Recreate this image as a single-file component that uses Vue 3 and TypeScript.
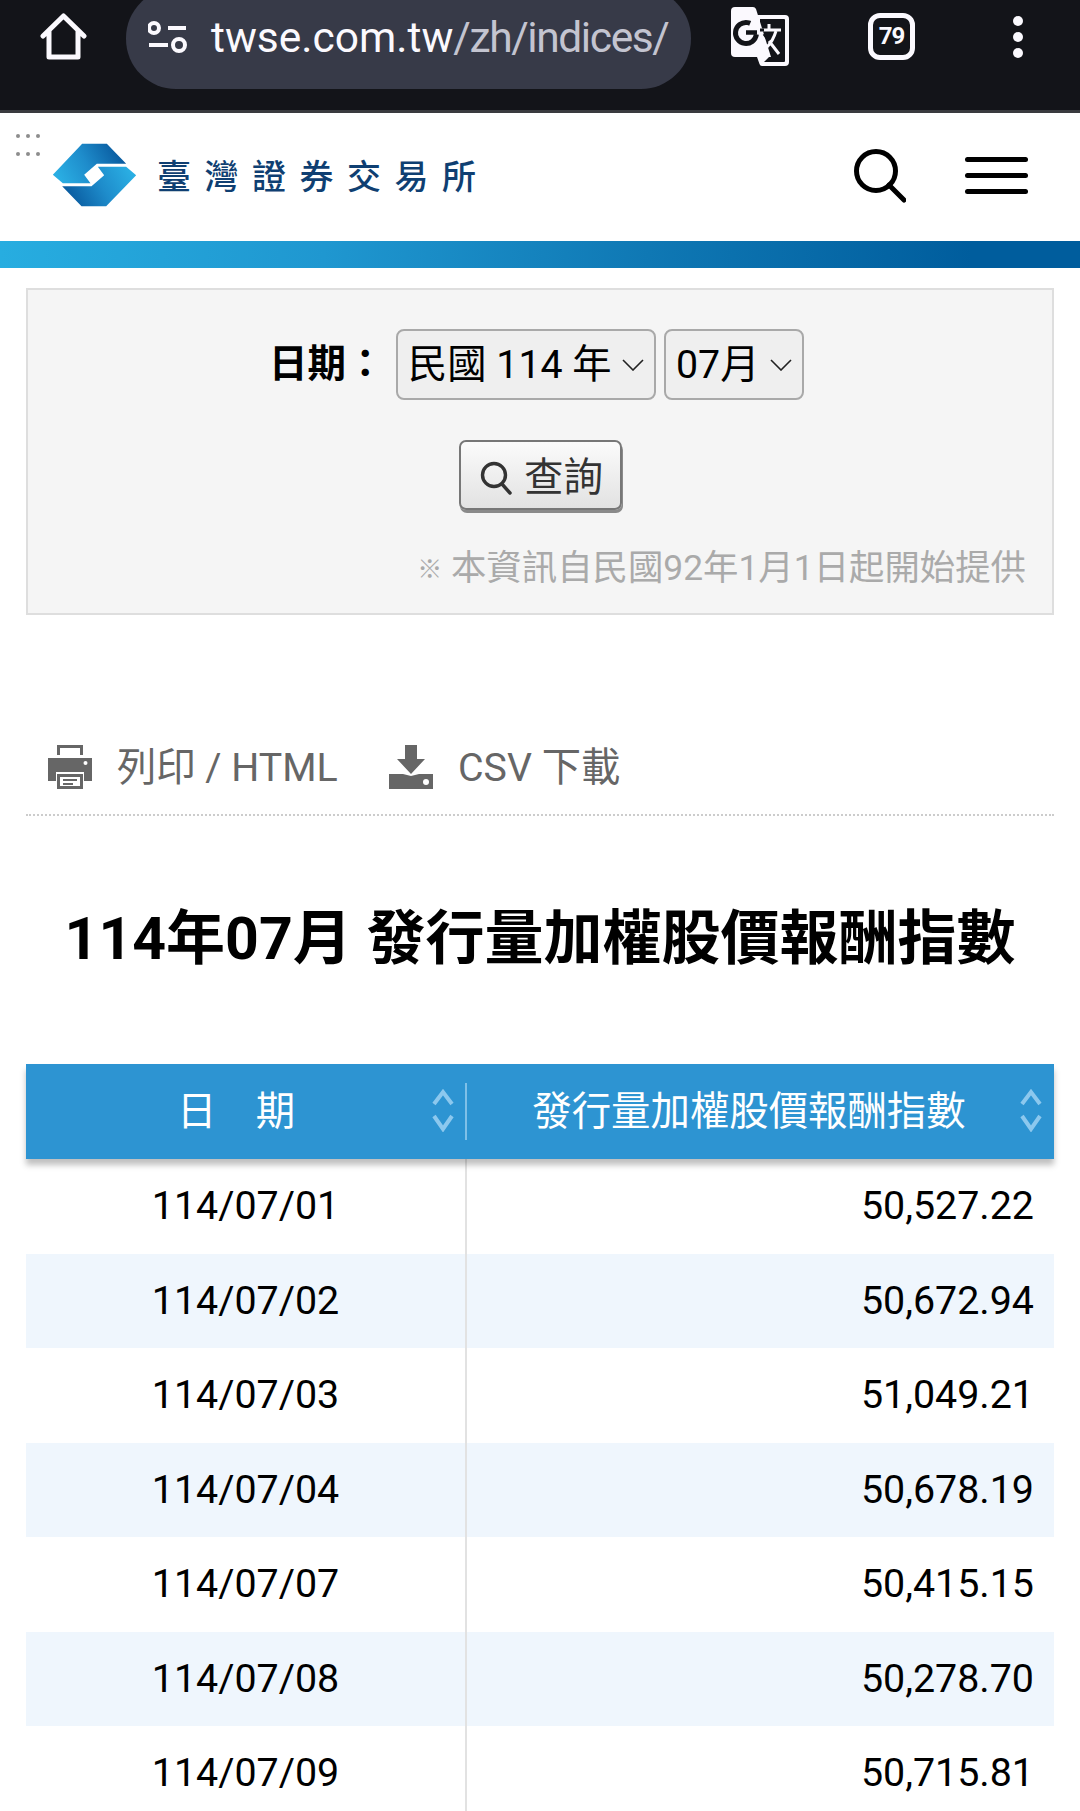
<script setup lang="ts">
interface Row { date: string; value: string }
const rows: Row[] = [
  { date: '114/07/01', value: '50,527.22' },
  { date: '114/07/02', value: '50,672.94' },
  { date: '114/07/03', value: '51,049.21' },
  { date: '114/07/04', value: '50,678.19' },
  { date: '114/07/07', value: '50,415.15' },
  { date: '114/07/08', value: '50,278.70' },
  { date: '114/07/09', value: '50,715.81' },
]
</script>

<template>
  <div class="page">
    <div class="chrome">
      <svg class="home" viewBox="0 0 47 47" width="47" height="47" fill="none" stroke="#fbf9fe" stroke-width="5" stroke-linejoin="round" stroke-linecap="round">
        <path d="M3 23 L23.5 3 L44 23 M9 18 V44 H38 V18" />
      </svg>
      <div class="pill">
        <svg class="tune" viewBox="0 0 40 40" width="40" height="40" fill="none" stroke="#fbf9fe" stroke-width="4">
          <circle cx="6" cy="8" r="5" />
          <path d="M20 8 H38 M1 25 H20" />
          <circle cx="31" cy="25" r="6" />
        </svg>
        <div class="url"><span class="host">twse.com.tw</span><span class="path">/zh/indices/</span></div>
      </div>
      <svg class="translate" viewBox="0 0 58 60" width="58" height="60">
        <path d="M26 8 H54 Q58 8 58 12 V55 Q58 59 54 59 H31 Q29 59 28.500 57 L26 50 Z" fill="#fbf9fe" />
        <path d="M29 12 H53 Q54 12 54 13 V54 Q54 55 53 55 H33 L38 50 L29 30 Z" fill="#131419" />
        <path d="M4 0 H22 Q24 0 25 2 L40 50 H4 Q0 50 0 46 V4 Q0 0 4 0 Z" fill="#fbf9fe" />
        <circle cx="15" cy="26" r="10.500" fill="none" stroke="#131419" stroke-width="5" stroke-dasharray="52 14" transform="rotate(8 15 26)" />
        <path d="M15 25.500 H26" stroke="#131419" stroke-width="4.500" />
        <path d="M29 23 H50 M38 17 V23" fill="none" stroke="#fbf9fe" stroke-width="3" />
        <path d="M29 23 H33 M33 27 L38 34" fill="none" stroke="#131419" stroke-width="3" />
        <path d="M45 24 Q42 34 36 40 M38 34 L48 47" fill="none" stroke="#fbf9fe" stroke-width="3" />
      </svg>
      <div class="tabs">79</div>
      <svg class="kebab" viewBox="0 0 10 42" width="10" height="42" fill="#fbf9fe">
        <circle cx="5" cy="5" r="5" /><circle cx="5" cy="21" r="5" /><circle cx="5" cy="37" r="5" />
      </svg>
    </div>

    <header class="site">
      <svg class="grip" viewBox="0 0 26 26" width="26" height="26" fill="#8d8d8d">
        <circle cx="3" cy="3" r="2" /><circle cx="13" cy="3" r="2" /><circle cx="23" cy="3" r="2" />
        <circle cx="3" cy="21" r="2" /><circle cx="13" cy="21" r="2" /><circle cx="23" cy="21" r="2" />
      </svg>
      <svg class="logo" viewBox="128 55 254 192" width="85" height="64">
        <defs>
          <linearGradient id="lgA" x1="0" y1="0.6" x2="1" y2="0.3">
            <stop offset="0" stop-color="#2aaee3" /><stop offset="0.45" stop-color="#1e8ccb" /><stop offset="1" stop-color="#07559a" />
          </linearGradient>
          <linearGradient id="lgB" x1="0" y1="0.7" x2="1" y2="0.4">
            <stop offset="0" stop-color="#07559a" /><stop offset="0.55" stop-color="#1e8ccb" /><stop offset="1" stop-color="#2aaee3" />
          </linearGradient>
        </defs>
        <path d="M130 150 L218 57 H292 L350 117 H262 L224 150 L243 176 H160 Z" fill="url(#lgA)" />
        <path d="M380 152 L290 245 H216 L158 185 H246 L284 152 L265 126 H350 Z" fill="url(#lgB)" />
      </svg>
      <div class="brand">臺灣證券交易所</div>
      <svg class="search" viewBox="0 0 52 54" width="52" height="54" fill="none" stroke="#000" stroke-width="5" stroke-linecap="round">
        <circle cx="22" cy="22" r="19.500" />
        <path d="M35 36 L50 51" />
      </svg>
      <div class="burger"><i></i><i></i><i></i></div>
    </header>
    <div class="band"></div>

    <main class="content">
      <form class="filter" @submit.prevent>
        <div class="date-row">
          <label class="date-label">日期：</label>
          <div class="sel sel-year">
            <select><option>民國 114 年</option></select>
            <svg viewBox="0 0 22 12" width="22" height="12" fill="none" stroke="#222" stroke-width="1.600"><path d="M1 1 L11 11 L21 1" /></svg>
          </div>
          <div class="sel sel-month">
            <select><option>07月</option></select>
            <svg viewBox="0 0 22 12" width="22" height="12" fill="none" stroke="#222" stroke-width="1.600"><path d="M1 1 L11 11 L21 1" /></svg>
          </div>
        </div>
        <div class="btn-row">
          <button class="query" type="submit">
            <svg viewBox="0 0 32 34" width="32" height="34" fill="none" stroke="#333" stroke-width="3.400" stroke-linecap="round">
              <circle cx="14" cy="14" r="11.500" /><path d="M22 23 L30 32" />
            </svg>
            <span>查詢</span>
          </button>
        </div>
        <p class="note"><span class="mark">※</span> 本資訊自民國92年1月1日起開始提供</p>
      </form>

      <div class="actions">
        <a class="action action-print">
          <svg viewBox="0 0 44 44" width="44" height="44" fill="#666">
            <path d="M9 0 H35 V10 H32 V3 H12 V10 H9 Z" />
            <path d="M0 13 H44 V36 H36 V27 H8 V36 H0 Z" />
            <circle cx="37.500" cy="18" r="2" fill="#fff" />
            <path fill-rule="evenodd" d="M9 29 H35 V44 H9 Z M12 32 V41 H32 V32 Z" />
            <path d="M15 34 H29 V36 H15 Z M15 38 H25 V40 H15 Z" />
          </svg>
          <span>列印 / HTML</span>
        </a>
        <a class="action">
          <svg viewBox="0 0 44 44" width="44" height="44" fill="#666">
            <path d="M16 0 H28 V14 H36 L22 29 L8 14 H16 Z" />
            <path d="M0 29 H14 L22 31 L30 29 H44 V44 H0 Z" />
            <circle cx="37" cy="37" r="3" fill="#fff" />
          </svg>
          <span>CSV 下載</span>
        </a>
      </div>

      <h1 class="title">114年07月 發行量加權股價報酬指數</h1>

      <div class="grid">
        <div class="head">
          <div class="th th-date">
            <span>日　期</span>
            <svg class="sort" viewBox="0 0 22 44" width="22" height="44" fill="none" stroke="#8cc8ee" stroke-width="4">
              <path d="M2 16 L11 4 L20 16 M2 28 L11 41 L20 28" />
            </svg>
          </div>
          <div class="th th-val">
            <span>發行量加權股價報酬指數</span>
            <svg class="sort" viewBox="0 0 22 44" width="22" height="44" fill="none" stroke="#8cc8ee" stroke-width="4">
              <path d="M2 16 L11 4 L20 16 M2 28 L11 41 L20 28" />
            </svg>
          </div>
        </div>
        <div v-for="r in rows" :key="r.date" class="row">
          <div class="td td-date">{{ r.date }}</div>
          <div class="td td-val">{{ r.value }}</div>
        </div>
      </div>
    </main>
  </div>
</template>

<style scoped>
.page {
  width: 1080px;
  height: 1811px;
  overflow: hidden;
  background: #fff;
  font-family: Roboto, "Noto Sans CJK TC", sans-serif;
  color: #000;
}
.chrome {
  height: 110px;
  border-bottom: 3px solid #3a3b3f;
  background: #131419;
  display: flex;
  align-items: flex-start;
  overflow: hidden;
}
.home { margin: 13px 0 0 40px; flex: none; }
.pill {
  margin: -12px 0 0 39px;
  width: 565px;
  height: 101px;
  flex: none;
  border-radius: 50px;
  background: #373a48;
  display: flex;
  align-items: center;
  padding: 12px 0 0 22px;
  box-sizing: border-box;
}
.tune { flex: none; margin-top: -9px; }
.url {
  margin-left: 23px;
  width: 460px;
  white-space: nowrap;
  font-size: 42.500px;
  line-height: 50px;
  margin-top: -14px;
}
.host { color: #fbf9fe; }
.path { color: #c3c4d0; letter-spacing: -1.400px; }
.translate { margin: 7px 0 0 40px; flex: none; }
.tabs {
  margin: 13px 0 0 79px;
  width: 47px;
  height: 47px;
  box-sizing: border-box;
  border: 5px solid #fbf9fe;
  border-radius: 12px;
  color: #fbf9fe;
  font-size: 24px;
  font-weight: 700;
  line-height: 37px;
  text-align: center;
  flex: none;
  letter-spacing: -1px;
}
.kebab { margin: 16px 0 0 98px; flex: none; }

.site {
  position: relative;
  height: 128px;
  display: flex;
  align-items: flex-start;
}
.grip { position: absolute; left: 15px; top: 20px; }
.logo { margin: 30px 0 0 52px; flex: none; }
.brand {
  margin: 42px 0 0 20px;
  width: 340px;
  font-size: 34px;
  line-height: 44px;
  letter-spacing: 13.500px;
  color: #0f3f72;
  font-weight: 500;
  white-space: nowrap;
  flex: none;
}
.search { margin: 36px 0 0 357px; flex: none; }
.burger {
  margin: 44px 0 0 59px;
  width: 63px;
  display: flex;
  flex-direction: column;
  gap: 11px;
  flex: none;
}
.burger i { display: block; height: 5px; border-radius: 3px; background: #000; }
.band {
  height: 27px;
  background: linear-gradient(90deg, #27ade0 0%, #1f97d0 30%, #0f78b4 60%, #005d9d 90%, #005d9d 100%);
}

.content { padding: 20px 26px 0; }
.filter {
  height: 327px;
  box-sizing: border-box;
  border: 2px solid #dedede;
  background: #f5f5f5;
  padding-top: 39px;
}
.date-row {
  display: flex;
  align-items: center;
  height: 71px;
  padding-left: 241px;
}
.date-label {
  font-size: 38.500px;
  font-weight: 700;
  width: 127px;
  line-height: 50px;
  margin-top: -1px;
}
.sel { position: relative; height: 71px; }
.sel-year { width: 260px; margin-right: 8px; }
.sel-month { width: 140px; }
.sel select {
  appearance: none;
  width: 100%;
  height: 100%;
  box-sizing: border-box;
  border: 2px solid #a9a9a9;
  border-radius: 8px;
  background: #efefef;
  color: #000;
  font: 39.300px Roboto, "Noto Sans CJK TC", sans-serif;
  padding: 0 0 0 10px;
}
.sel svg { position: absolute; right: 12px; top: 30px; pointer-events: none; }
.btn-row { display: flex; padding-left: 431px; margin-top: 40px; }
.query {
  width: 163px;
  height: 70px;
  box-sizing: border-box;
  border: 2px solid #777;
  border-radius: 7px;
  background: linear-gradient(#fbfbfb, #e2e2e2);
  box-shadow: 1px 3px 0 #8a8a8a;
  display: flex;
  align-items: center;
  padding: 0 0 0 19px;
  gap: 12px;
  color: #333;
  font: 39.500px Roboto, "Noto Sans CJK TC", sans-serif;
}
.query svg { margin-top: 6px; flex: none; }
.query span { margin-top: -4px; }
.note {
  margin: 33px 0 0;
  padding-right: 26px;
  text-align: right;
  font-size: 35.400px;
  line-height: 50px;
  color: #aaa;
}
.mark { font-size: 25px; font-weight: 700; vertical-align: 2px; }
.actions {
  margin-top: 130px;
  height: 69px;
  border-bottom: 2px dotted #ccc;
  display: flex;
  align-items: flex-start;
  color: #666;
  font-size: 39.300px;
  line-height: 46px;
  padding-left: 22px;
}
.action { display: flex; align-items: flex-start; gap: 25px; white-space: nowrap; }
.action-print { width: 341px; }
.title {
  margin: 83px 0 85px;
  font-size: 59px;
  line-height: 80px;
  font-weight: 700;
  text-align: center;
  white-space: nowrap;
}
.head {
  position: relative;
  height: 95px;
  background: #2d94d2;
  color: #fff;
  display: grid;
  grid-template-columns: 440px 1fr;
  box-shadow: 0 6px 6px rgba(0, 0, 0, 0.25);
  font-size: 39.400px;
}
.th {
  display: flex;
  align-items: center;
  justify-content: center;
  padding: 0 22px 8px 0;
  position: relative;
}
.th-date { padding-right: 20px; }
.th-date::after {
  content: "";
  position: absolute;
  right: -1px;
  top: 19px;
  bottom: 19px;
  width: 2px;
  background: #7fc0e8;
}
.sort { position: absolute; top: 24px; }
.th-date .sort { right: 12px; }
.th-val .sort { right: 12px; }
.row {
  display: grid;
  grid-template-columns: 440px 1fr;
  height: 94.500px;
  font-size: 39.400px;
}
.row:nth-child(odd) { background: #eff6fd; }
.td { display: flex; align-items: center; padding-bottom: 1px; box-sizing: border-box; }
.td-date { justify-content: center; border-right: 2px solid #e2e2e2; margin-right: -1px; }
.td-val { justify-content: flex-end; padding-right: 20px; }
</style>

<style>
html, body { margin: 0; background: #fff; overflow: hidden; }
</style>
